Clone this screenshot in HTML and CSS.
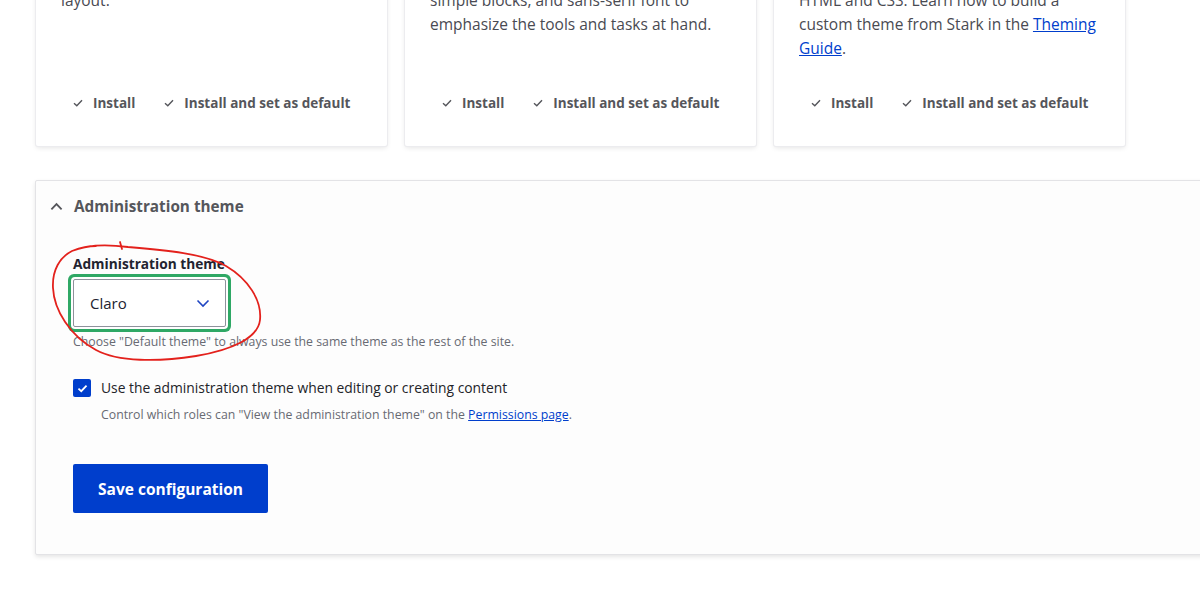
FILE: index.html
```html
<!DOCTYPE html>
<html lang="en">

<head>
    <meta charset="UTF-8">
    <meta name="viewport" content="width=device-width, initial-scale=1">
    <title>Appearance</title>
    <link rel="stylesheet" href="styles.css">
</head>

<body>

    <main class="page">

        <div class="theme_list">
            <div class="theme_card">
                <p class="theme_desc">A flexible, recolorable theme with many<br>regions and a responsive, mobile-first<br>layout.</p>
                <ul class="theme_actions">
                    <li><a href="#" class="action_link"><svg class="action_icon" viewBox="0 0 10 8"><path d="M1 4.2 L3.8 6.8 L9 1.2"/></svg>Install</a></li>
                    <li><a href="#" class="action_link"><svg class="action_icon" viewBox="0 0 10 8"><path d="M1 4.2 L3.8 6.8 L9 1.2"/></svg>Install and set as default</a></li>
                </ul>
            </div>
            <div class="theme_card">
                <p class="theme_desc">The default administration theme for<br>Drupal 8 was designed with clean lines,<br>simple blocks, and sans-serif font to<br>emphasize the tools and tasks at hand.</p>
                <ul class="theme_actions">
                    <li><a href="#" class="action_link"><svg class="action_icon" viewBox="0 0 10 8"><path d="M1 4.2 L3.8 6.8 L9 1.2"/></svg>Install</a></li>
                    <li><a href="#" class="action_link"><svg class="action_icon" viewBox="0 0 10 8"><path d="M1 4.2 L3.8 6.8 L9 1.2"/></svg>Install and set as default</a></li>
                </ul>
            </div>
            <div class="theme_card">
                <p class="theme_desc">An intentionally plain theme with no<br>styling to demonstrate default Drupal's<br>HTML and CSS. Learn how to build a<br>custom theme from Stark in the <a href="#">Theming<br>Guide</a>.</p>
                <ul class="theme_actions">
                    <li><a href="#" class="action_link"><svg class="action_icon" viewBox="0 0 10 8"><path d="M1 4.2 L3.8 6.8 L9 1.2"/></svg>Install</a></li>
                    <li><a href="#" class="action_link"><svg class="action_icon" viewBox="0 0 10 8"><path d="M1 4.2 L3.8 6.8 L9 1.2"/></svg>Install and set as default</a></li>
                </ul>
            </div>
        </div>

        <details class="admin_box" open>
            <summary class="admin_summary">
                <svg class="summary_icon" viewBox="0 0 14 9"><path d="M1.5 7.5 L7 2 L12.5 7.5"/></svg>
                Administration theme
            </summary>
            <form class="admin_form">
                <div class="form_item">
                    <label class="field_label" for="admin_theme">Administration theme</label>
                    <div class="select_wrap">
                        <select id="admin_theme" class="select_field">
                            <option>Claro</option>
                        </select>
                        <svg class="select_icon" viewBox="0 0 14 9"><path d="M1.5 1.5 L7 7 L12.5 1.5"/></svg>
                    </div>
                    <div class="field_desc">Choose "Default theme" to always use the same theme as the rest of the site.</div>
                </div>

                <div class="form_item check_item">
                    <label class="check_label">
                        <span class="check_box"><svg viewBox="0 0 12 10"><path d="M1.5 5.2 L4.6 8 L10.5 1.8"/></svg></span>
                        Use the administration theme when editing or creating content
                    </label>
                    <div class="field_desc check_desc">Control which roles can "View the administration theme" on the <a href="#">Permissions page</a>.</div>
                </div>

                <button type="button" class="save_btn">Save configuration</button>
            </form>
        </details>

    </main>

    <!-- red hand drawn note from the screenshot -->
    <svg class="scribble" width="1200" height="602" viewBox="0 0 1200 602">
        <path d="M120 242 L122 249" />
        <path d="M72 251 C86 245 106 244 128 247 C166 250 205 254 226 266 C248 279 262 300 260 320 C258 338 232 350 196 356 C158 362 118 362 96 350 C70 336 54 310 53 288 C52 270 60 257 72 251 C80 248 88 246 96 246" />
    </svg>

</body>

</html>
```

FILE: styles.css
```css
body {
    margin: 0;
    background: #ffffff;
    font-family: 'Open Sans', 'Noto Sans', sans-serif;
    color: #222330;
    overflow: hidden;
    height: 602px;
}

a {
    color: #003ecc;
}

.page {
    padding-left: 35px;
}

/* theme cards, page is scrolled so the tops are cut off */
.theme_list {
    display: grid;
    grid-template-columns: repeat(3, 351px);
    gap: 18px;
    margin-top: -84px;
    padding-left: 1px;
}

.theme_card {
    display: flex;
    flex-direction: column;
    background: #ffffff;
    border-radius: 2px;
    box-shadow: 0 0 0 1px #ececef, 0 2px 5px rgba(0, 0, 0, 0.1);
    padding: 24px 25px 33px;
}

.theme_desc {
    margin: 0 0 33px;
    font-size: 15.5px;
    line-height: 24px;
    color: #494a52;
    white-space: nowrap;
}

.theme_actions {
    list-style: none;
    margin: auto 0 0;
    padding: 0 0 0 12px;
    display: flex;
    gap: 29px;
}

.action_link {
    display: flex;
    align-items: center;
    gap: 10px;
    font-size: 13.5px;
    line-height: 20px;
    font-weight: 700;
    color: #55565b;
    text-decoration: none;
}

.action_icon {
    width: 10px;
    height: 8px;
    fill: none;
    stroke: #55565b;
    stroke-width: 1.4;
}

/* administration theme box */
.admin_box {
    margin-top: 34px;
    margin-right: -40px;
    border: 1px solid #e3e3e6;
    border-radius: 2px;
    background: #fdfdfd;
    box-shadow: 0 2px 4px rgba(0, 0, 0, 0.1);
}

.admin_summary {
    list-style: none;
    display: flex;
    align-items: center;
    gap: 11px;
    padding: 15px 13px 15px 14px;
    font-size: 15.3px;
    line-height: 20px;
    font-weight: 700;
    color: #55565b;
    cursor: pointer;
}

.admin_summary::-webkit-details-marker {
    display: none;
}

.summary_icon {
    width: 13px;
    height: 9px;
    fill: none;
    stroke: #55565b;
    stroke-width: 2;
}

.admin_form {
    padding: 23px 37px 41px;
}

.field_label {
    display: block;
    font-size: 13.7px;
    line-height: 20px;
    font-weight: 700;
    color: #222330;
    margin-bottom: 5px;
}

.select_wrap {
    position: relative;
    width: 153px;
}

.select_field {
    display: block;
    width: 153px;
    height: 48px;
    appearance: none;
    border: 1px solid #8e929c;
    border-radius: 2px;
    background: #ffffff;
    padding: 0 40px 0 16px;
    font-family: inherit;
    font-size: 15px;
    color: #222330;
    box-shadow: 0 0 0 2px #ffffff, 0 0 0 5px #2fa865;
    outline: none;
}

.select_icon {
    position: absolute;
    right: 16px;
    top: 20px;
    width: 14px;
    height: 9px;
    fill: none;
    stroke: #1f45c2;
    stroke-width: 1.6;
    pointer-events: none;
}

.field_desc {
    margin-top: 6px;
    font-size: 12.3px;
    line-height: 18px;
    color: #686a73;
}

.check_item {
    margin-top: 25px;
}

.check_label {
    display: flex;
    align-items: center;
    gap: 10px;
    font-size: 13.85px;
    line-height: 24px;
    color: #232429;
}

.check_box {
    display: flex;
    align-items: center;
    justify-content: center;
    width: 18px;
    height: 18px;
    border-radius: 2px;
    background: #003ecc;
}

.check_box svg {
    width: 11px;
    height: 9px;
    fill: none;
    stroke: #ffffff;
    stroke-width: 2;
}

.check_desc {
    padding-left: 28px;
}

.save_btn {
    margin-top: 40px;
    display: block;
    width: 195px;
    height: 49px;
    border: none;
    border-radius: 2px;
    background: #003ecc;
    color: #ffffff;
    font-family: inherit;
    font-size: 15.5px;
    font-weight: 700;
    cursor: pointer;
}

.scribble {
    position: absolute;
    top: 0;
    left: 0;
    pointer-events: none;
    fill: none;
    stroke: #e3211c;
    stroke-width: 1.8;
    stroke-linecap: round;
}
```
